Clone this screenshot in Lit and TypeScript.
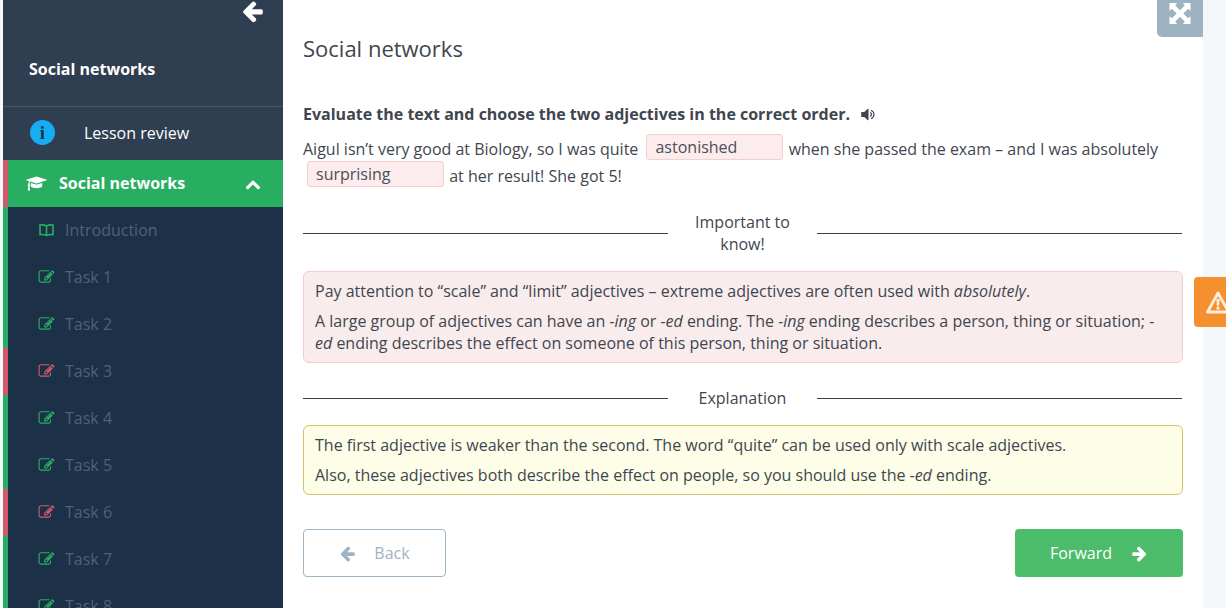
import { LitElement, html, css, svg } from "lit";
import { customElement } from "lit/decorators.js";

const pencil = svg`<path d="M888 1184l116-116-152-152-116 116v56h96v96h56zm440-720q-16-16-33 1l-350 350q-17 17-1 33t33-1l350-350q17-17 1-33zm80 594v190q0 119-84.5 203.5t-203.5 84.5h-832q-119 0-203.5-84.5t-84.5-203.5v-832q0-119 84.5-203.5t203.5-84.5h832q63 0 117 25 15 7 18 23 3 17-9 29l-49 49q-14 14-32 8-23-6-45-6h-832q-66 0-113 47t-47 113v832q0 66 47 113t113 47h832q66 0 113-47t47-113v-126q0-13 9-22l64-64q15-15 35-7t20 29zm-96-738l288 288-672 672h-288v-288zm444 132l-92 92-288-288 92-92q28-28 68-28t68 28l152 152q28 28 28 68t-28 68z"/>`;
const arrowLeft = svg`<path d="M1664 896v128q0 53-32.5 90.5t-84.5 37.5h-704l293 294q38 36 38 90t-38 90l-75 76q-37 37-90 37-52 0-91-37l-651-652q-37-37-37-90 0-52 37-91l651-650q38-38 91-38 52 0 90 38l75 74q38 38 38 91t-38 91l-293 293h704q52 0 84.5 37.5t32.5 90.5z"/>`;
const arrowRight = svg`<path d="M1600 960q0 54-37 91l-651 651q-39 37-91 37-51 0-90-37l-75-75q-38-38-38-91t38-91l293-293h-704q-52 0-84.5-37.5t-32.5-90.5v-128q0-53 32.5-90.5t84.5-37.5h704l-293-294q-38-36-38-90t38-90l75-75q38-38 90-38 53 0 91 38l651 651q37 35 37 90z"/>`;

const tasks: { name: string; bad?: boolean }[] = [
  { name: "Task 1" },
  { name: "Task 2" },
  { name: "Task 3", bad: true },
  { name: "Task 4" },
  { name: "Task 5" },
  { name: "Task 6", bad: true },
  { name: "Task 7" },
  { name: "Task 8" },
];

@customElement("app-root")
export class AppRoot extends LitElement {
  static styles = css`
    :host {
      display: flex;
      position: relative;
      width: 100%;
      height: 608px;
      overflow: hidden;
      background: #f5f8fb;
      padding-left: 3px;
      padding-right: 23px;
      box-sizing: border-box;
      font-family: "Open Sans", sans-serif;
      font-size: 16px;
      color: #3f4650;
    }
    .side {
      width: 280px;
      flex: none;
      height: 608px;
      overflow: hidden;
      background: #1c3048;
    }
    .head {
      background: #2f3e50;
    }
    .back-row {
      height: 24px;
      display: flex;
      justify-content: flex-end;
      padding: 0 18px 0 0;
    }
    .back-row svg {
      width: 25px;
      height: 24px;
      fill: #fff;
      margin-top: -1px;
    }
    .brand {
      height: 83px;
      box-sizing: border-box;
      padding: 8px 0 0 26px;
      display: flex;
      align-items: center;
      color: #fff;
      font-weight: 700;
      font-size: 16px;
      border-bottom: 1px solid #465464;
    }
    .review {
      height: 53px;
      box-sizing: border-box;
      display: flex;
      align-items: center;
      color: #fff;
      padding: 0 0 2px 27px;
    }
    .info {
      width: 25px;
      height: 25px;
      border-radius: 50%;
      background: #15aef5;
      color: #203246;
      font: 700 19px/25px "Liberation Serif", serif;
      text-align: center;
      margin-right: 29px;
    }
    .active {
      height: 47px;
      box-sizing: border-box;
      display: flex;
      align-items: center;
      background: #27ae60;
      border-left: 5px solid #d2596c;
      color: #fff;
      font-weight: 700;
      padding: 0 22px 2px 18px;
    }
    .active .cap {
      width: 21px;
      height: 17px;
      fill: #fff;
      margin: 2px 12px 0 0;
    }
    .active span {
      flex: 1;
    }
    .active .chev {
      width: 16px;
      height: 16px;
      fill: #fff;
      margin-top: 3px;
    }
    .item {
      height: 47px;
      box-sizing: border-box;
      display: flex;
      align-items: center;
      border-left: 5px solid #27ae60;
      padding: 0 0 2px 30px;
      color: #4f6276;
    }
    .item.bad {
      border-left-color: #d2596c;
    }
    .item svg {
      width: 17px;
      height: 16px;
      margin-right: 10px;
      fill: #27ae60;
      flex: none;
    }
    .item.bad svg {
      fill: #d2596c;
    }
    .item .book {
      fill: none;
      stroke: #27ae60;
      stroke-width: 1.6;
    }
    .main {
      position: relative;
      flex: 1;
      background: #fff;
      padding: 0 20px;
      min-width: 0;
    }
    h1 {
      margin: 0;
      padding-top: 32px;
      font-size: 22px;
      line-height: 32px;
      font-weight: 400;
      color: #3f4650;
    }
    .q {
      margin: 37px 0 0;
      font-weight: 700;
      line-height: 26px;
      display: flex;
      align-items: center;
    }
    .q svg {
      width: 17px;
      height: 17px;
      margin-left: 10px;
      fill: #3f4650;
    }
    .text {
      margin: 9px 0 0;
      line-height: 27px;
    }
    .blank {
      display: inline-block;
      box-sizing: border-box;
      width: 137px;
      height: 26px;
      line-height: 24px;
      padding: 0 8px;
      margin: -3px 1px -3px 4px;
      vertical-align: 2px;
      background: #fdeced;
      border: 1px solid #f3cfd2;
      border-radius: 3px;
      color: #4a4f57;
    }
    .sep {
      display: grid;
      grid-template-columns: 365px 149px 365px;
      align-items: center;
      text-align: center;
      line-height: 22px;
    }
    .sep i {
      display: block;
      height: 1px;
      background: #3a3f46;
    }
    .sep span {
      padding: 0 20px;
    }
    .sep.one {
      margin-top: 21px;
    }
    .sep.two {
      margin-top: 24px;
    }
    .alert {
      box-sizing: border-box;
      border-radius: 6px;
      padding: 8px 11px;
      line-height: 22px;
    }
    .alert p {
      margin: 0 0 8px;
    }
    .alert p:last-child {
      margin: 0;
    }
    .red {
      margin-top: 16px;
      background: #f9ecec;
      border: 1px solid #f3ccd0;
    }
    .yellow {
      margin-top: 16px;
      background: #fdfde8;
      border: 1px solid #d4c26a;
    }
    .nav {
      margin-top: 34px;
      display: flex;
      justify-content: space-between;
    }
    .btn {
      box-sizing: border-box;
      height: 48px;
      display: flex;
      align-items: center;
      justify-content: center;
      border-radius: 4px;
    }
    .btn svg {
      width: 17px;
      height: 17px;
    }
    .back {
      width: 143px;
      border: 1px solid #9db5c4;
      color: #a5b3bf;
      background: #fff;
      gap: 18px;
    }
    .back svg {
      fill: #9db3c3;
    }
    .fwd {
      width: 168px;
      background: #4cbb6a;
      color: #fff;
      gap: 19px;
    }
    .fwd svg {
      fill: #fff;
    }
    .expand {
      position: absolute;
      right: 0;
      top: 0;
      width: 46px;
      height: 37px;
      background: #9db3c2;
      border-radius: 0 0 0 5px;
      display: flex;
      align-items: flex-start;
      justify-content: center;
      padding-top: 3px;
      box-sizing: border-box;
    }
    .expand svg {
      width: 22px;
      height: 21px;
      fill: #fff;
    }
    .warn {
      position: absolute;
      left: 1194px;
      top: 277px;
      width: 40px;
      height: 50px;
      background: #f6902e;
      border-radius: 4px 0 0 4px;
      display: flex;
      align-items: center;
      padding-left: 12px;
      box-sizing: border-box;
    }
    .warn svg {
      width: 24px;
      height: 23px;
      flex: none;
    }
  `;

  render() {
    return html`
      <aside class="side">
        <div class="head">
          <div class="back-row"><svg viewBox="0 0 1792 1792">${arrowLeft}</svg></div>
          <div class="brand">Social networks</div>
          <div class="review"><div class="info">i</div>Lesson review</div>
        </div>
        <div class="active">
          <svg class="cap" viewBox="0 0 2304 1792"><path d="M1774 836l18 316q4 69-82 128t-235 93.5-323 34.5-323-34.5-235-93.5-82-128l18-316 574 181q22 7 48 7t48-7zm530-324q0 23-22 31l-1120 352q-4 1-10 1t-10-1l-652-206q-43 34-71 111.5t-34 178.5q63 36 63 109 0 69-58 107l58 433q2 14-8 25-9 11-24 11h-192q-15 0-24-11-10-11-8-25l58-433q-58-38-58-107 0-73 65-111 11-207 98-330l-333-104q-22-8-22-31t22-31l1120-352q4-1 10-1t10 1l1120 352q22 8 22 31z"/></svg>
          <span>Social networks</span>
          <svg class="chev" viewBox="0 0 1792 1792"><path d="M1683 1331l-166 165q-19 19-45 19t-45-19l-531-531-531 531q-19 19-45 19t-45-19l-166-165q-19-19-19-45.5t19-45.5l742-741q19-19 45-19t45 19l742 741q19 19 19 45.5t-19 45.5z"/></svg>
        </div>
        <div class="item">
          <svg viewBox="0 0 17 16"><path class="book" d="M8.5 4 Q6 2.6 2 3 V12.6 Q6 12.2 8.5 13.6 Q11 12.2 15 12.6 V3 Q11 2.6 8.5 4 V13.6"/></svg>
          Introduction
        </div>
        ${tasks.map(
          (t) => html`<div class="item ${t.bad ? "bad" : ""}">
            <svg viewBox="0 0 1792 1792">${pencil}</svg>${t.name}
          </div>`
        )}
      </aside>
      <main class="main">
        <div class="expand">
          <svg viewBox="0 0 22 22"><path d="M0 0H8L6 2.5L11 7.5L16 2.5L14 0H22V8L19.5 6L14.5 11L19.5 16L22 14V22H14L16 19.5L11 14.5L6 19.5L8 22H0V14L2.5 16L7.5 11L2.5 6L0 8Z"/></svg>
        </div>
        <h1>Social networks</h1>
        <p class="q">
          Evaluate the text and choose the two adjectives in the correct order.
          <svg viewBox="0 0 1664 1792"><path d="M832 352v1088q0 26-19 45t-45 19-45-19l-333-333h-262q-26 0-45-19t-19-45v-384q0-26 19-45t45-19h262l333-333q19-19 45-19t45 19 19 45zm384 544q0 76-42.5 141.5t-112.5 93.5q-10 5-25 5-26 0-45-18.5t-19-45.5q0-21 12-35.5t29-25 34-23 29-36 12-56.5-12-56.5-29-36-34-23-29-25-12-35.5q0-27 19-45.5t45-18.5q15 0 25 5 70 27 112.5 93t42.5 142zm256 0q0 153-85 282.5t-225 188.5q-13 5-25 5-27 0-46-19t-19-45q0-39 39-59 56-29 76-44 74-54 115.5-135.5t41.5-173.5-41.5-173.5-115.5-135.5q-20-15-76-44-39-20-39-59 0-26 19-45t45-19q13 0 26 5 140 59 225 188.5t85 282.5z"/></svg>
        </p>
        <p class="text">
          Aigul isn’t very good at Biology, so I was quite <span class="blank">astonished</span> when she passed the exam – and I was absolutely <span class="blank">surprising</span> at her result! She got 5!
        </p>
        <div class="sep one"><i></i><span>Important to know!</span><i></i></div>
        <div class="alert red">
          <p>Pay attention to “scale” and “limit” adjectives – extreme adjectives are often used with <em>absolutely</em>.</p>
          <p>A large group of adjectives can have an <em>-ing</em> or <em>-ed</em> ending. The <em>-ing</em> ending describes a person, thing or situation; <em>-ed</em> ending describes the effect on someone of this person, thing or situation.</p>
        </div>
        <div class="sep two"><i></i><span>Explanation</span><i></i></div>
        <div class="alert yellow">
          <p>The first adjective is weaker than the second. The word “quite” can be used only with scale adjectives.</p>
          <p>Also, these adjectives both describe the effect on people, so you should use the <em>-ed</em> ending.</p>
        </div>
        <div class="nav">
          <div class="btn back"><svg viewBox="0 0 1792 1792">${arrowLeft}</svg>Back</div>
          <div class="btn fwd">Forward<svg viewBox="0 0 1792 1792">${arrowRight}</svg></div>
        </div>
      </main>
      <div class="warn">
        <svg viewBox="0 0 24 23"><path d="M12 2 L22.5 21 H1.5 Z" fill="none" stroke="#fdeedd" stroke-width="2.8" stroke-linejoin="round"/><path d="M10.4 8 h3.2 l-.4 6.8 h-2.4 z M10.5 15.8 h3 v2.8 h-3 z" fill="#fdeedd"/></svg>
      </div>
    `;
  }
}
